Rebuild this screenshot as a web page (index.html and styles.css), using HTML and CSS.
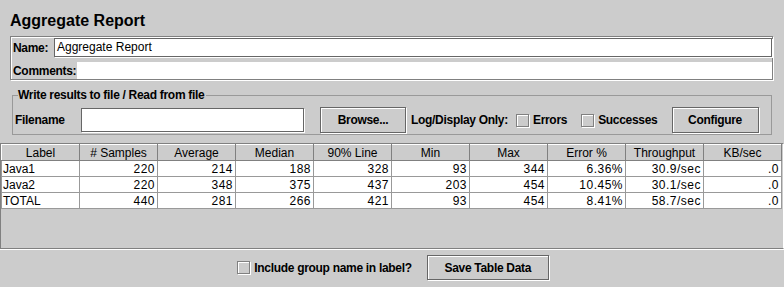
FILE: index.html
```html
<!DOCTYPE html>
<html lang="en">

<head>
 <meta charset="UTF-8">
 <title>Aggregate Report</title>
 <link rel="stylesheet" href="styles.css">
</head>

<body>

 <h1 class="title">Aggregate Report</h1>

 <!-- Nombre y comentarios -->
 <div class="name-panel">
  <div class="name-row">
   <label class="lbl">Name:</label>
   <div class="name-field">Aggregate Report</div>
  </div>
  <div class="comments-row">
   <label class="lbl">Comments:</label>
   <div class="comments-field"></div>
  </div>
 </div>

 <!-- Archivo -->
 <fieldset class="file-box">
  <legend>Write results to file / Read from file</legend>
  <div class="file-row">
   <span class="lbl file-lbl">Filename</span>
   <div class="file-field"></div>
   <span class="btn browse">Browse...</span>
   <span class="lbl">Log/Display Only:</span>
   <span class="check"></span>
   <span class="lbl">Errors</span>
   <span class="check succ"></span>
   <span class="lbl">Successes</span>
   <span class="btn configure">Configure</span>
  </div>
 </fieldset>

 <!-- Tabla de resultados -->
 <div class="table-pane">
  <table class="report">
   <thead>
    <tr>
     <th>Label</th><th># Samples</th><th>Average</th><th>Median</th><th>90% Line</th>
     <th>Min</th><th>Max</th><th>Error %</th><th>Throughput</th><th>KB/sec</th>
    </tr>
   </thead>
   <tbody>
    <tr>
     <td class="txt">Java1</td><td>220</td><td>214</td><td>188</td><td>328</td>
     <td>93</td><td>344</td><td>6.36%</td><td>30.9/sec</td><td>.0</td>
    </tr>
    <tr>
     <td class="txt">Java2</td><td>220</td><td>348</td><td>375</td><td>437</td>
     <td>203</td><td>454</td><td>10.45%</td><td>30.1/sec</td><td>.0</td>
    </tr>
    <tr>
     <td class="txt">TOTAL</td><td>440</td><td>281</td><td>266</td><td>421</td>
     <td>93</td><td>454</td><td>8.41%</td><td>58.7/sec</td><td>.0</td>
    </tr>
   </tbody>
  </table>
 </div>

 <div class="bottom">
  <span class="check"></span>
  <span class="lbl include">Include group name in label?</span>
  <span class="btn save">Save Table Data</span>
 </div>

</body>

</html>
```

FILE: styles.css
```css
/* Base */
* {
    margin: 0;
    padding: 0;
    box-sizing: border-box;
}

body {
    background-color: #cccccc;
    color: #000000;
    font-family: 'Liberation Sans', Arial, sans-serif;
    font-size: 12px;
    width: 784px;
    height: 287px;
    overflow: hidden;
}

.title {
    font-size: 16px;
    font-weight: bold;
    height: 36px;
    line-height: 18px;
    padding: 12px 0 0 10px;
}

.lbl {
    font-weight: bold;
    font-size: 12px;
    letter-spacing: -0.3px;
    white-space: nowrap;
}

/* Panel de nombre */
.name-panel {
    margin: 0 11px 0 10px;
    height: 44px;
    border: 1px solid #808080;
    box-shadow: 1px 1px 0 #ffffff, inset 1px 1px 0 #ffffff;
    padding: 1px 0 0 1px;
}

.name-row {
    display: flex;
    align-items: center;
    height: 19px;
}

.name-row .lbl {
    width: 42px;
    padding-left: 1px;
}

.name-field {
    width: 718px;
    height: 19px;
    background-color: #ffffff;
    border: 1px solid #666666;
    box-shadow: 1px 1px 0 #ffffff;
    padding-left: 2px;
    line-height: 17px;
}

.comments-row {
    display: flex;
    align-items: center;
    margin-top: 5px;
    height: 17px;
}

.comments-row .lbl {
    width: 65px;
    padding-left: 1px;
}

.comments-field {
    flex: 1;
    height: 17px;
    background-color: #ffffff;
}

/* Caja de archivo */
.file-box {
    margin: 8px 12px 0 12px;
    height: 47px;
    border: 1px solid #999999;
    padding: 0 2px;
}

.file-box legend {
    font-weight: bold;
    letter-spacing: -0.3px;
    margin-left: 3px;
    padding: 0 2px 0 0;
    line-height: 14px;
}

.file-row {
    display: flex;
    align-items: center;
    height: 26px;
    margin-top: 5px;
}

.file-lbl {
    width: 66px;
}

.file-field {
    width: 223px;
    height: 24px;
    background-color: #ffffff;
    border: 1px solid #666666;
    box-shadow: 1px 1px 0 #ffffff;
    margin-right: 16px;
}

.btn {
    display: flex;
    align-items: center;
    justify-content: center;
    font-weight: bold;
    letter-spacing: -0.3px;
    border: 1px solid #666666;
    box-shadow: 1px 1px 0 #ffffff, inset 1px 1px 0 #ffffff;
    height: 26px;
}

.browse {
    width: 86px;
    margin-right: 5px;
}

.check {
    display: inline-block;
    width: 13px;
    height: 13px;
    border: 1px solid #808080;
    box-shadow: 1px 1px 0 #ffffff, inset 1px 1px 0 #ffffff;
    margin: 0 4px 0 8px;
    flex-shrink: 0;
}

.succ {
    margin-left: 14px;
}

.configure {
    width: 87px;
    margin-left: 14px;
}

/* Tabla */
.table-pane {
    margin-top: 8px;
    height: 106px;
    border: 1px solid #808080;
    border-right-color: #ffffff;
    border-bottom: 1px solid #808080;
    box-shadow: 0 1px 0 #ffffff;
}

.report {
    border-collapse: collapse;
    table-layout: fixed;
    width: 780px;
}

.report th {
    font-weight: normal;
    width: 78px;
    height: 16px;
    padding: 0;
    text-align: center;
    border-left: 1px solid #ffffff;
    border-top: 1px solid #ffffff;
    border-right: 1px solid #808080;
    border-bottom: 1px solid #808080;
    line-height: 14px;
}

.report td {
    background-color: #ffffff;
    height: 16px;
    padding: 0 2px 0 0;
    text-align: right;
    border: 1px solid #999999;
    line-height: 14px;
    letter-spacing: 0.5px;
}

.report td.txt {
    text-align: left;
    padding-left: 1px;
    letter-spacing: 0;
}

/* Parte inferior */
.bottom {
    display: flex;
    align-items: center;
    justify-content: center;
    height: 37px;
    padding-left: 2px;
}

.bottom .check {
    margin: 0 4px 0 0;
}

.include {
    margin-right: 15px;
}

.save {
    width: 122px;
    height: 25px;
}
```
